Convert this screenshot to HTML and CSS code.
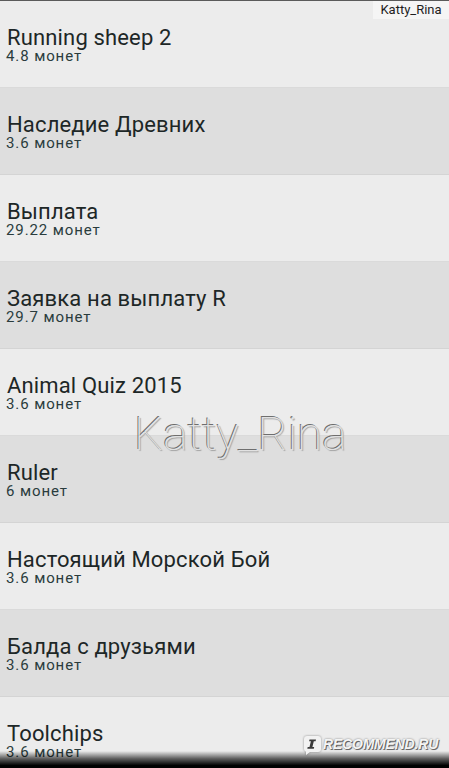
FILE: index.html
```html
<!DOCTYPE html>
<html lang="ru">
<head>
    <meta charset="UTF-8">
    <meta name="viewport" content="width=device-width, initial-scale=1.0">
    <title>Задания</title>
    <link rel="stylesheet" href="styles.css">
</head>
<body>
    <div class="screen">
        <ul class="task-list">
            <li class="task">
                <div class="task-title">Running sheep 2</div>
                <div class="task-price">4.8 монет</div>
            </li>
            <li class="task">
                <div class="task-title">Наследие Древних</div>
                <div class="task-price">3.6 монет</div>
            </li>
            <li class="task">
                <div class="task-title">Выплата</div>
                <div class="task-price">29.22 монет</div>
            </li>
            <li class="task">
                <div class="task-title">Заявка на выплату R</div>
                <div class="task-price">29.7 монет</div>
            </li>
            <li class="task">
                <div class="task-title">Animal Quiz 2015</div>
                <div class="task-price">3.6 монет</div>
            </li>
            <li class="task">
                <div class="task-title">Ruler</div>
                <div class="task-price">6 монет</div>
            </li>
            <li class="task">
                <div class="task-title">Настоящий Морской Бой</div>
                <div class="task-price">3.6 монет</div>
            </li>
            <li class="task">
                <div class="task-title">Балда с друзьями</div>
                <div class="task-price">3.6 монет</div>
            </li>
            <li class="task">
                <div class="task-title">Toolchips</div>
                <div class="task-price">3.6 монет</div>
            </li>
        </ul>

        <div class="user-tag">Katty_Rina</div>
        <div class="watermark">Katty_Rina</div>
        <div class="bottom-fade"></div>
        <div class="recommend">
            <svg class="recommend-icon" width="17" height="19" viewBox="0 0 17 19">
                <path d="M3 0h11a3 3 0 0 1 3 3v10a3 3 0 0 1-3 3H6l-4 3v-3.3A3 3 0 0 1 0 13V3a3 3 0 0 1 3-3z" fill="#f2f2f2"/>
                <path d="M5.5 3.5h6.5l-.4 1.8h-1.8l-1.4 5.6h1.8l-.4 1.8H3.3l.4-1.8h1.8l1.4-5.6H5.1z" fill="#3a3a3a"/>
            </svg>
            <span class="recommend-text">RECOMMEND.RU</span>
        </div>
    </div>
</body>
</html>
```

FILE: styles.css
```css
* {
    margin: 0;
    padding: 0;
    box-sizing: border-box;
}

body {
    font-family: 'Roboto', 'Noto Sans', sans-serif;
    background: #ebebeb;
    width: 449px;
    height: 768px;
    overflow: hidden;
}

.screen {
    position: relative;
    height: 768px;
    overflow: hidden;
    border-top: 1px solid #5a5a5a;
}

.task-list {
    list-style: none;
}

.task {
    height: 87px;
    padding: 26px 0 0 7px;
    background: #ececec;
    border-bottom: 1px solid #dadada;
}

.task:nth-child(even) {
    background: #dedede;
    border-bottom-color: #d4d4d4;
}

.task-title {
    font-size: 22px;
    line-height: 22px;
    letter-spacing: 0.15px;
    color: #1d2727;
}

.task-price {
    font-size: 15px;
    line-height: 15px;
    letter-spacing: 0.9px;
    color: #2a3c3d;
    margin-left: -1px;
}

/* подписи поверх скриншота */
.user-tag {
    position: absolute;
    top: -1px;
    right: 0;
    width: 76px;
    height: 19px;
    background: #f5f5f5;
    color: #1e1e1e;
    font-size: 13px;
    line-height: 19px;
    text-align: center;
}

.watermark {
    position: absolute;
    top: 403px;
    left: 134px;
    font-family: 'Roboto', sans-serif;
    font-weight: 100;
    font-size: 46px;
    line-height: 60px;
    color: #e2e2e2;
    text-shadow: -1px -1px 0 #6e6e6e, 1px 1px 1px #a0a0a0;
}

.bottom-fade {
    position: absolute;
    left: 0;
    right: 0;
    bottom: 0;
    height: 17px;
    background: linear-gradient(to bottom, rgba(0, 0, 0, 0) 0%, rgba(0, 0, 0, 0.6) 45%, #000 85%);
}

.recommend {
    position: absolute;
    left: 304px;
    top: 735px;
    display: flex;
    align-items: flex-start;
    gap: 2px;
}

.recommend-icon {
    display: block;
    filter: drop-shadow(0 0 1px rgba(0, 0, 0, 0.4));
}

.recommend-text {
    font-family: 'Liberation Sans', sans-serif;
    font-weight: bold;
    font-style: italic;
    font-size: 14px;
    line-height: 17px;
    color: #f4f4f4;
    letter-spacing: -0.2px;
    text-shadow: 0 0 2px rgba(0, 0, 0, 0.5), 1px 1px 0 #777;
}
```
